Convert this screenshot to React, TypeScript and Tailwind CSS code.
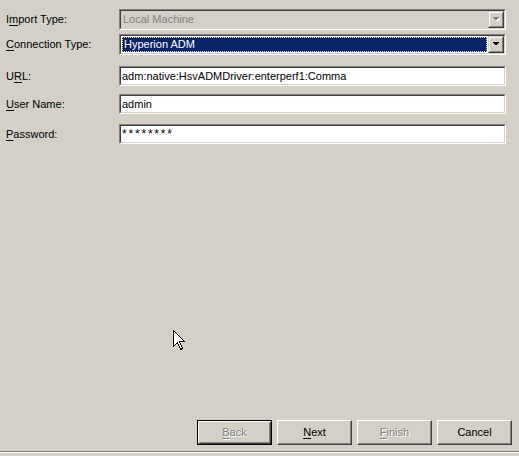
import React from "react";

const font = "font-['Liberation_Sans',Arial,sans-serif] text-[11px] leading-[13px]";

function Mn({ children }: { children: React.ReactNode }) {
  return <span className="underline underline-offset-[2px]">{children}</span>;
}

function Sunken({ children, className = "" }: { children: React.ReactNode; className?: string }) {
  return (
    <div className={`border border-t-[#808080] border-l-[#808080] border-b-white border-r-white ${className}`}>
      <div className="h-full border border-t-[#404040] border-l-[#404040] border-b-[#d4d0c8] border-r-[#d4d0c8]">
        {children}
      </div>
    </div>
  );
}

function DropButton({ disabled }: { disabled?: boolean }) {
  return (
    <div className="w-[16px] h-full border border-t-[#d4d0c8] border-l-[#d4d0c8] border-b-[#404040] border-r-[#404040] bg-[#d4d0c8]">
      <div className="h-full border border-t-white border-l-white border-b-[#808080] border-r-[#808080] flex items-center justify-center">
        <svg width="8" height="5" viewBox="0 0 8 5" shapeRendering="crispEdges">
          {disabled && <path d="M2 1h7l-3.5 4z" fill="#fff" />}
          <path d="M0.5 0h7L4 4z" fill={disabled ? "#808080" : "#000"} />
        </svg>
      </div>
    </div>
  );
}

function Row({ label, className, children }: { label: React.ReactNode; className: string; children: React.ReactNode }) {
  return (
    <div className={`flex items-center ${className}`}>
      <div className="w-[113px] text-black">{label}</div>
      <div className="flex-1 h-full">{children}</div>
    </div>
  );
}

function TextField({ value, password }: { value: string; password?: boolean }) {
  return (
    <Sunken className="h-full">
      <div
        className={`h-full bg-white flex items-center pl-[1px] text-black whitespace-nowrap overflow-hidden ${
          password ? "tracking-[1.8px] text-[12px]" : ""
        }`}
      >
        {value}
      </div>
    </Sunken>
  );
}

function Button({ label, disabled, isDefault }: { label: React.ReactNode; disabled?: boolean; isDefault?: boolean }) {
  const text = disabled ? "text-[#808080] [text-shadow:1px_1px_0_#fff]" : "text-black";
  if (isDefault) {
    return (
      <div className="w-[75px] h-[25px] border border-black">
        <div className="h-full border border-t-white border-l-white border-b-[#404040] border-r-[#404040]">
          <div className={`h-full border border-transparent border-b-[#808080] border-r-[#808080] flex items-center justify-center ${text}`}>
            {label}
          </div>
        </div>
      </div>
    );
  }
  return (
    <div className="w-[75px] h-[25px] border border-t-white border-l-white border-b-[#404040] border-r-[#404040]">
      <div className={`h-full border border-transparent border-b-[#808080] border-r-[#808080] flex items-center justify-center ${text}`}>
        {label}
      </div>
    </div>
  );
}

export default function App() {
  return (
    <div className={`relative w-[519px] h-[456px] bg-[#d4d0c8] flex flex-col overflow-hidden ${font}`}>
      <div className="pt-[9px] pl-[6px] pr-[13px]">
        <Row className="h-[21px]" label={<>I<Mn>m</Mn>port Type:</>}>
          <Sunken className="h-full">
            <div className="h-full flex bg-[#d4d0c8]">
              <div className="flex-1 flex items-center pl-[2px] text-[#808080]">Local Machine</div>
              <DropButton disabled />
            </div>
          </Sunken>
        </Row>
        <Row className="h-[21px] mt-[4px]" label={<><Mn>C</Mn>onnection Type:</>}>
          <Sunken className="h-full">
            <div className="h-full flex bg-white">
              <div className="flex-1 p-[1px]">
                <div className="h-full bg-[#0a246a] border border-dotted border-[#f5db95] flex items-center pl-[1px] text-white">
                  Hyperion ADM
                </div>
              </div>
              <DropButton />
            </div>
          </Sunken>
        </Row>
        <Row className="h-[20px] mt-[11px]" label={<>U<Mn>R</Mn>L:</>}>
          <TextField value="adm:native:HsvADMDriver:enterperf1:Comma" />
        </Row>
        <Row className="h-[20px] mt-[8px]" label={<><Mn>U</Mn>ser Name:</>}>
          <TextField value="admin" />
        </Row>
        <Row className="h-[20px] mt-[10px]" label={<><Mn>P</Mn>assword:</>}>
          <TextField value="********" password />
        </Row>
      </div>

      <div className="flex-1" />

      <div className="flex justify-end gap-[5px] pr-[7px]">
        <Button label={<><Mn>B</Mn>ack</>} disabled isDefault />
        <Button label={<><Mn>N</Mn>ext</>} />
        <Button label={<><Mn>F</Mn>inish</>} disabled />
        <Button label="Cancel" />
      </div>
      <div className="mt-[6px] h-px bg-[#808080]" />
      <div className="h-px bg-white" />
      <div className="h-[3px]" />

      <svg className="absolute left-[173px] top-[330px]" width="12" height="20" viewBox="0 0 12 20" shapeRendering="crispEdges">
        <path d="M0.5 0.5V16.5L4.5 12.5L7.5 19.5L9.5 18.5L6.5 11.5H11.5Z" fill="#fff" stroke="#000" strokeWidth="1" />
      </svg>
    </div>
  );
}
